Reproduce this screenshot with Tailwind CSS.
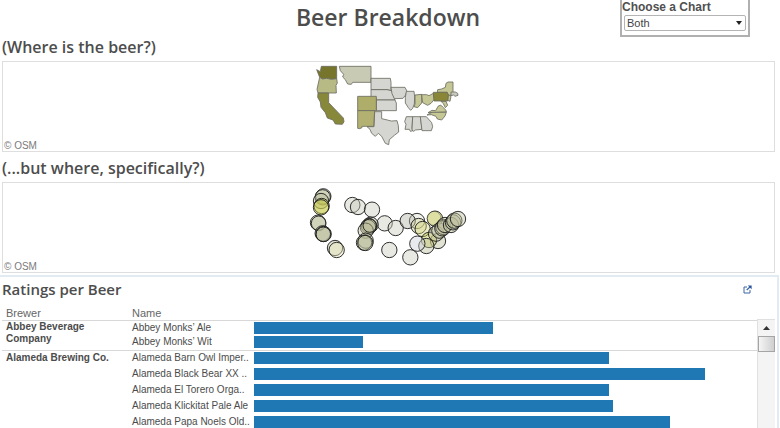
<!DOCTYPE html>
<html lang="en">
<head>
<meta charset="utf-8">
<meta name="viewport" content="width=device-width, initial-scale=1">
<title>Beer Breakdown</title>
<script src="https://cdn.jsdelivr.net/npm/@tailwindcss/browser@4"></script>
</head>
<body class="flex h-screen flex-col overflow-hidden bg-white font-['Liberation_Sans',Arial,sans-serif] text-[11px] text-[#555]">
<header class="grid h-[37px] shrink-0 grid-cols-[1fr_auto_1fr] items-start pr-[4px]">
  <h1 class="col-start-2 font-['Trebuchet_MS','Open_Sans',sans-serif] text-[23px] leading-[34px] font-semibold text-[#4d4d4d]">Beer Breakdown</h1>
  <div class="mr-[26px] flex h-[37px] w-[130px] flex-col justify-self-end border-x-2 border-b-2 border-[#b0b0b0] pr-[2px]">
    <label for="chart" class="text-[12px] leading-[14px] font-bold text-[#505050]">Choose a Chart</label>
    <div class="relative mt-[1px] ml-[2px]">
      <select id="chart" class="block h-[16px] w-full appearance-none rounded-[2px] border border-[#b4b4b4] bg-white pl-[2px] text-[11px] leading-[14px] text-[#444]"><option>Both</option><option>States</option><option>Cities</option></select>
      <svg class="pointer-events-none absolute top-[6px] right-[4px] h-[4px] w-[6px]" viewBox="0 0 6 4"><path d="M0 0h6L3 4z" fill="#222"/></svg>
    </div>
  </div>
</header>
<main class="flex min-h-0 flex-1 flex-col">
  <section class="mr-[5px] ml-[2px]">
    <h2 class="h-[24px] font-['Trebuchet_MS','Open_Sans',sans-serif] text-[16px] leading-[20px] font-semibold text-[#4d4d4d]">(Where is the beer?)</h2>
    <div class="relative flex h-[91px] justify-center border border-[#dedede]">
      <svg class="h-[89px] w-[170px]" viewBox="14 6 510 267" stroke="#6b6b60" stroke-width="2.5" stroke-linejoin="round" role="img" aria-label="Beer by state">
        <path fill="#77752c" d="M66 19H112V56L96 58 82 55 70 57 61 52 52 29 63 35z"/>
        <path fill="#b8ba86" d="M61 52L70 57 82 55 96 58 112 56 114 69 110 76 111 99H56L53 88z"/>
        <path fill="#878839" d="M56 99H88V128L132 174 134 185 129 193 108 192 101 180 84 174 78 158 65 142 63 126 55 112z"/>
        <path fill="#c8cab4" d="M120 19H215V67H160L156 73 145 72 138 59 130 51 133 43 123 32z"/>
        <g fill="#d5d6d1"><path d="M215 55H273L275 67V92L263 89H215z"/><path d="M215 89H263L277 92 287 120H231V115H215z"/><path d="M231 120H287L291 129V152H231z"/><path d="M275 82H317L323 94 318 106 311 115 285 116 278 101z"/><path d="M321 94H344L346 111 345 132 340 145 334 151 327 143 318 129 318 113z"/><path d="M226 155H247V176L260 179 276 183 293 182 297 197 298 216 285 226 270 239 268 254 258 250 247 229 237 220 228 229 217 220 212 208 203 200H224z"/><path d="M321 170H340L338 205 341 212 333 214 330 208 317 208 320 193 316 185z"/><path d="M340 170H363L368 208 348 210 343 214 338 210z"/><path d="M363 170H381L397 188 400 200 396 212H368z"/></g>
        <path fill="#aead69" d="M175 109H231V152H175z"/><path fill="#b2b172" d="M175 152H226L223 199H188V203L181 206 175 205z"/>
        <g fill="#c5c795"><path d="M347 105L367 103V129L355 143 344 140 347 132z"/><path d="M367 104L382 104 389 107 402 100 405 118 395 130 385 136 370 128z"/><path d="M414 97L415 89 427 87 438 82 440 70 446 66H461V95L455 105 447 110 443 97z"/><path d="M386 158L398 151 409 152 416 139 424 135 430 141 440 151 441 156z"/><path d="M383 165L398 157H441L437 168 427 180 414 177 410 169 396 164z"/><path d="M446 103L455 109 452 124 445 121z"/><path d="M425 124H440L445 136 438 143 432 131z"/></g>
        <path fill="#898637" d="M402 97H444L447 106 445 123H404z"/>
        <path fill="#c9cac2" d="M455 96H468L475 100 476 106 467 109 463 105 455 107z"/>
      </svg>
      <small class="absolute bottom-0 left-[1px] text-[10px] leading-[10px] text-[#7b7b7b]">© OSM</small>
    </div>
  </section>
  <section class="mr-[5px] ml-[2px] pt-[6px]">
    <h2 class="h-[24px] font-['Trebuchet_MS','Open_Sans',sans-serif] text-[16px] leading-[20px] font-semibold text-[#4d4d4d]">(...but where, specifically?)</h2>
    <div class="relative flex h-[91px] justify-center border border-[#dedede]">
      <svg class="h-[89px] w-[180px]" viewBox="-3 3 540 267" fill="#b9bc98" fill-opacity=".42" stroke="#1c1c1c" stroke-opacity=".9" stroke-width="3" role="img" aria-label="Beer by city">
        <g><circle cx="70" cy="43" r="23"/><circle cx="68" cy="46" r="23"/><circle cx="63" cy="57" r="23"/><circle cx="65" cy="72" r="23" fill="#c6c850"/><circle cx="63" cy="76" r="23" fill="#c9cb48"/><circle cx="54" cy="122" r="23"/><circle cx="56" cy="124" r="22"/><circle cx="68" cy="154" r="23"/><circle cx="71" cy="156" r="23"/><circle cx="70" cy="157" r="22"/><circle cx="105" cy="198" r="23"/><circle cx="110" cy="204" r="23" fill="#e6e7bb"/></g>
        <g fill="#c7cbb9"><circle cx="157" cy="69" r="23"/><circle cx="174" cy="75" r="23"/><circle cx="216" cy="83" r="23"/><circle cx="254" cy="124" r="23"/><circle cx="287" cy="138" r="23"/><circle cx="268" cy="204" r="23"/><circle cx="331" cy="226" r="23"/></g>
        <g><circle cx="212" cy="128" r="23"/><circle cx="207" cy="132" r="23"/><circle cx="204" cy="136" r="23"/><circle cx="197" cy="146" r="23"/><circle cx="209" cy="131" r="20"/><circle cx="197" cy="176" r="23"/><circle cx="192" cy="182" r="23"/><circle cx="196" cy="183" r="23"/></g>
        <g><circle cx="351" cy="117" r="23" fill="#dde0cf"/><circle cx="323" cy="117" r="23" fill="#afb1a3"/><circle cx="356" cy="132" r="23" fill="#d7d79d"/><circle cx="368" cy="141" r="23" fill="#d5d77d"/><circle cx="405" cy="110" r="23" fill="#c4c74c"/><circle cx="402" cy="109" r="21" fill="#d1d38a" stroke-opacity=".3"/><circle cx="414" cy="177" r="23"/><circle cx="387" cy="174" r="23" fill="#c8ca4c"/><circle cx="379" cy="192" r="23"/><circle cx="352" cy="185" r="23" fill="#cbcdd3"/><circle cx="408" cy="155" r="23"/><circle cx="418" cy="146" r="23"/><circle cx="430" cy="135" r="23"/><circle cx="427" cy="139" r="23"/><circle cx="435" cy="129" r="23"/><circle cx="453" cy="129" r="23"/><circle cx="459" cy="121" r="23"/><circle cx="463" cy="116" r="23"/><circle cx="474" cy="111" r="23"/></g>
      </svg>
      <small class="absolute bottom-0 left-[1px] text-[10px] leading-[10px] text-[#7b7b7b]">© OSM</small>
    </div>
  </section>
  <section class="mt-[2px] mr-[1px] flex min-h-0 flex-1 flex-col border-t-2 border-r-2 border-[#e3ebf2]">
    <div class="flex h-[30px] items-start justify-between pr-[25px] pl-[2px]">
      <h2 class="pt-[2px] font-['Trebuchet_MS','Open_Sans',sans-serif] text-[15px] leading-[20px] font-semibold text-[#4d4d4d]">Ratings per Beer</h2>
      <a href="#ratings" aria-label="Open ratings" class="mt-[8px]"><svg class="size-[9px]" viewBox="0 0 9 9" fill="none" stroke="#3d67a8"><path d="M4 2H1V8H7V5"/><path d="M3.7 5L7 2" stroke-width="1.3"/><path d="M4.8 .4H8.6V4.2z" fill="#28559c" stroke="none"/></svg></a>
    </div>
    <div class="flex min-h-0 flex-1 overflow-hidden px-[2px]" id="ratings">
      <div class="min-w-0 flex-1">
      <table class="w-full table-fixed border-collapse text-left text-[10px] leading-[12px] text-[#4c4c4c]">
        <colgroup><col class="w-[126px]"><col class="w-[126px]"><col></colgroup>
        <thead><tr class="h-[13px] border-b border-[#d8d8d8] text-[11px] text-[#666]"><th class="p-0 pl-[4px] font-normal">Brewer</th><th class="p-0 pl-[4px] font-normal">Name</th><th class="p-0" aria-label="Rating"></th></tr></thead>
        <tbody class="border-b border-[#d8d8d8]">
          <tr class="h-[15px]"><th rowspan="2" class="p-0 pr-[20px] pl-[4px] align-top font-bold">Abbey Beverage Company</th><td class="p-0 pl-[4px] whitespace-nowrap">Abbey Monks’ Ale</td><td class="p-0"><div class="h-[12px] bg-[#1f77b4]" style="width:47.5%"></div></td></tr>
          <tr class="h-[15px]"><td class="p-0 pl-[4px] whitespace-nowrap">Abbey Monks’ Wit</td><td class="p-0"><div class="h-[12px] bg-[#1f77b4]" style="width:21.7%"></div></td></tr>
        </tbody>
        <tbody>
          <tr class="h-[16px]"><th rowspan="5" class="p-0 pt-[1px] pl-[4px] align-top font-bold">Alameda Brewing Co.</th><td class="p-0 pl-[4px] whitespace-nowrap">Alameda Barn Owl Imper..</td><td class="p-0"><div class="h-[12px] bg-[#1f77b4]" style="width:70.5%"></div></td></tr>
          <tr class="h-[16px]"><td class="p-0 pl-[4px] whitespace-nowrap">Alameda Black Bear XX ..</td><td class="p-0"><div class="h-[12px] bg-[#1f77b4]" style="width:89.6%"></div></td></tr>
          <tr class="h-[16px]"><td class="p-0 pl-[4px] whitespace-nowrap">Alameda El Torero Orga..</td><td class="p-0"><div class="h-[12px] bg-[#1f77b4]" style="width:70.5%"></div></td></tr>
          <tr class="h-[16px]"><td class="p-0 pl-[4px] whitespace-nowrap">Alameda Klickitat Pale Ale</td><td class="p-0"><div class="h-[12px] bg-[#1f77b4]" style="width:71.4%"></div></td></tr>
          <tr class="h-[16px]"><td class="p-0 pl-[4px] whitespace-nowrap">Alameda Papa Noels Old..</td><td class="p-0"><div class="h-[12px] bg-[#1f77b4]" style="width:82.8%"></div></td></tr>
        </tbody>
      </table>
      </div>
      <div class="mt-[12px] flex w-[18px] shrink-0 flex-col border-t border-l border-[#e0e0e0] bg-[#f4f4f4]">
        <button class="flex h-[16px] items-center justify-center" aria-label="Scroll up"><svg class="h-[4px] w-[7px]" viewBox="0 0 7 4"><path d="M0 4L3.5 0 7 4z" fill="#333"/></svg></button>
        <div class="h-[16px] border border-[#a5a5a5] bg-linear-to-r from-[#f5f5f5] to-[#cfcfcf]"></div>
      </div>
    </div>
  </section>
</main>
</body>
</html>
